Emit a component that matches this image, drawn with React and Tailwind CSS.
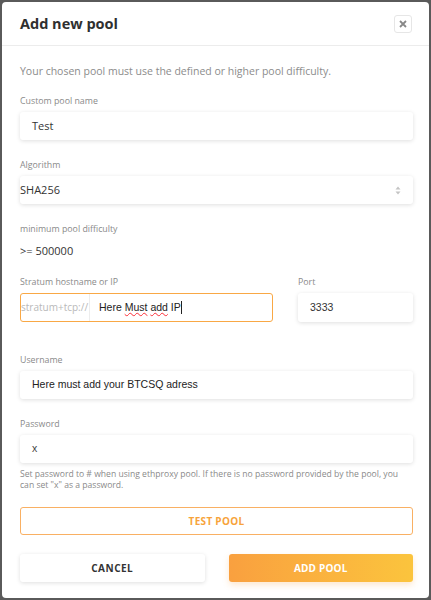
import React from 'react';

const label = "block text-[8.8px] leading-[12px] text-[#8a8a8a] mb-[5px]";
const box = "h-[28px] rounded-[3px] bg-white shadow-[0_1px_4px_rgba(0,0,0,0.13)] flex items-center";
const arial = { fontFamily: '"Liberation Sans", Arial, sans-serif' };

const App = () => {
  return (
    <div className="w-[431px] h-[600px] bg-[#5a5a5a] p-[2px]" style={{ fontFamily: '"Open Sans", "Noto Sans", sans-serif' }}>
      <div className="h-full bg-white rounded-[4px] flex flex-col overflow-hidden">
        <div className="h-[44px] shrink-0 flex items-center justify-between pl-[18px] pr-[17px] border-b border-[#ececec]">
          <h2 className="text-[14.5px] font-bold text-[#2f2f2f]">Add new pool</h2>
          <button className="w-[18px] h-[18px] border border-[#e6e6e6] rounded-[3px] flex items-center justify-center">
            <svg width="8" height="8" viewBox="0 0 8 8">
              <path d="M1 1L7 7M7 1L1 7" stroke="#888" strokeWidth="1.8" />
            </svg>
          </button>
        </div>

        <div className="pl-[18px] pr-[16px] pt-[18px]">
          <p className="text-[10.5px] leading-[14px] text-[#8c8c8c] mb-[17px]">Your chosen pool must use the defined or higher pool difficulty.</p>

          <label className={label}>Custom pool name</label>
          <div className={box + " px-[12px] text-[11px] text-[#333]"}>Test</div>

          <label className={label + " mt-[19px]"}>Algorithm</label>
          <div className={box + " pr-[12px] justify-between text-[11px] text-[#333]"}>
            <span>SHA256</span>
            <svg width="6" height="9" viewBox="0 0 6 9">
              <path d="M3 0.5L5.5 3.5H0.5Z M3 8.5L5.5 5.5H0.5Z" fill="#c4c4c4" />
            </svg>
          </div>

          <label className={label + " mt-[19px]"}>minimum pool difficulty</label>
          <div className="text-[11px] leading-[14px] text-[#333] mt-[9px]">&gt;= 500000</div>

          <div className="flex gap-[25px] mt-[18px]">
            <div className="w-[253px]">
              <label className={label + " mb-[4px]"}>Stratum hostname or IP</label>
              <div className="h-[29px] rounded-[3px] border border-[#f9a845] bg-white flex items-center">
                <span className="text-[10px] text-[#b9b9b9] w-[69px] h-full flex items-center border-r border-[#ededed]">stratum+tcp://</span>
                <span className="pl-[9px] text-[10.5px] text-[#222]" style={arial}>
                  Here <span className="underline decoration-wavy decoration-red-500 decoration-[1px]">Must</span> <span className="underline decoration-wavy decoration-red-500 decoration-[1px]">add</span> IP<span className="inline-block w-[1px] h-[13px] bg-[#222] align-middle" />
                </span>
              </div>
            </div>
            <div className="flex-1">
              <label className={label + " mb-[4px]"}>Port</label>
              <div className={box + " h-[29px] px-[12px] text-[10.5px] text-[#333]"} style={arial}>3333</div>
            </div>
          </div>

          <label className={label + " mt-[32px]"}>Username</label>
          <div className={box + " px-[12px] text-[10.5px] text-[#222]"} style={arial}>Here must add your BTCSQ adress</div>

          <label className={label + " mt-[19px]"}>Password</label>
          <div className={box + " px-[12px] text-[10.5px] text-[#444]"} style={arial}>x</div>
          <p className="text-[8.6px] leading-[11px] text-[#8a8a8a] mt-[6px]">
            Set password to # when using ethproxy pool. If there is no password provided by the pool, you can set "x" as a password.
          </p>

          <button className="mt-[16px] w-full h-[28px] rounded-[3px] border border-[#f9b063] text-[10px] font-bold tracking-[0.3px] text-[#f7a33b]">
            TEST POOL
          </button>

          <div className="flex gap-[24px] mt-[19px]">
            <button className="flex-1 h-[28px] rounded-[3px] bg-white shadow-[0_1px_4px_rgba(0,0,0,0.13)] text-[10px] font-bold tracking-[0.5px] text-[#333]">
              CANCEL
            </button>
            <button className="flex-1 h-[28px] rounded-[3px] bg-gradient-to-r from-[#f9a03f] to-[#fbc43d] shadow-[0_3px_6px_rgba(249,160,63,0.25)] text-[10px] font-bold tracking-[0.2px] text-white">
              ADD POOL
            </button>
          </div>
        </div>
      </div>
    </div>
  );
};

export default App;
